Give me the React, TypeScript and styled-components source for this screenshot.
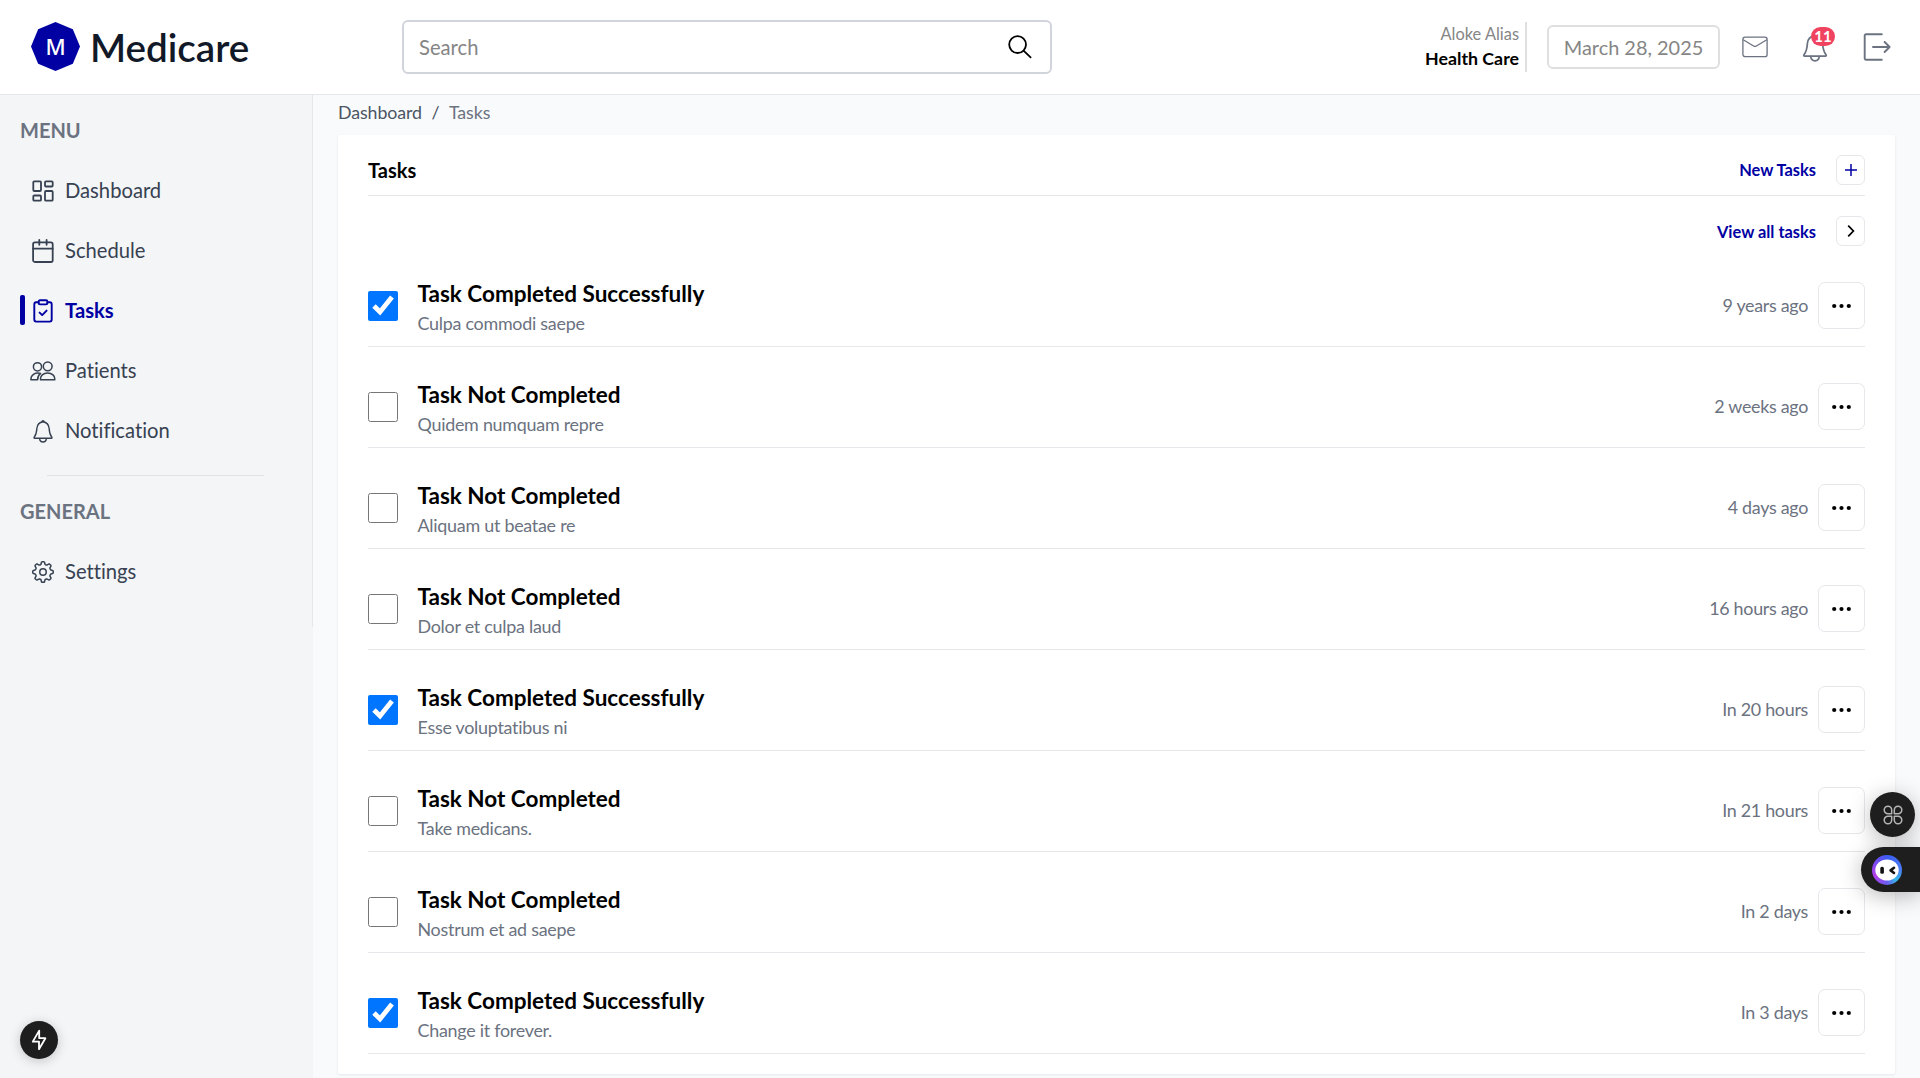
import React from "react";
import styled, { createGlobalStyle, css } from "styled-components";
import { GoGear } from "react-icons/go";

const navy = "#0000a3";
const line = "#e5e7eb";

const GlobalStyle = createGlobalStyle`
  * { box-sizing: border-box; }
  html, body { height: 100%; }
  body {
    margin: 0;
    overflow: hidden;
    background: #f9fafc;
    color: #000;
    font-family: Lato, "Open Sans", sans-serif;
    font-variant-ligatures: none;
  }
`;

const Page = styled.div`
  display: flex;
  flex-direction: column;
  height: 1078px;
  overflow: hidden;
`;

/* ---------- header ---------- */

const Header = styled.header`
  display: flex;
  align-items: center;
  flex: none;
  height: 95px;
  padding: 0 29px 1px 30px;
  background: #fff;
  border-bottom: 1px solid ${line};
`;

const Brand = styled.div`
  display: flex;
  align-items: center;
  gap: 11px;
  width: 372px;
  flex: none;
  padding-left: 1px;
`;

const BrandMark = styled.div`
  display: grid;
  place-items: center;
  width: 49px;
  height: 49px;
  clip-path: polygon(50% 0, 85.4% 14.6%, 100% 50%, 85.4% 85.4%, 50% 100%, 14.6% 85.4%, 0 50%, 14.6% 14.6%);
  background: ${navy};
  color: #fff;
  font: 500 22px/49px "Noto Sans", sans-serif;
`;

const BrandName = styled.span`
  font-size: 38.6px;
  font-weight: 600;
  line-height: 48px;
  padding-top: 1px;
  margin-left: -1px;
  color: #111827;
`;

const SearchBox = styled.label`
  display: flex;
  align-items: center;
  justify-content: space-between;
  width: 650px;
  height: 54px;
  flex: none;
  padding: 0 18px 0 15px;
  border: 2px solid #d1d5db;
  border-radius: 6px;
  background: #fff;
`;

const SearchInput = styled.input`
  flex: 1;
  border: 0;
  outline: 0;
  padding: 1px 0 0;
  background: transparent;
  font: 400 20.2px/26px Lato, sans-serif;
  &::placeholder { color: #858585; opacity: 1; }
`;

const HeaderRight = styled.div`
  display: flex;
  align-items: center;
  margin-left: auto;
`;

const User = styled.div`
  display: flex;
  flex-direction: column;
  justify-content: center;
  height: 50px;
  padding: 0 6px 2px 0;
  border-right: 2px solid #dedfe1;
  text-align: right;
`;

const UserName = styled.span`
  color: #858585;
  font-size: 16.4px;
  line-height: 24px;
`;

const UserRole = styled.span`
  font-size: 17.8px;
  font-weight: 700;
  line-height: 24px;
`;

const DateBox = styled.div`
  display: flex;
  align-items: center;
  justify-content: center;
  width: 173px;
  height: 44px;
  margin: 0 22px 0 20px;
  border: 2px solid #dfdfdf;
  border-radius: 6px;
  color: #858585;
  font-size: 19.9px;
`;

const HeaderIcons = styled.div`
  display: flex;
  align-items: center;
  gap: 32px;
  color: #6b7280;
  svg { display: block; }
`;

const BellWrap = styled.div`
  position: relative;
  margin-right: 1px;
`;

const Badge = styled.span`
  position: absolute;
  top: -5px;
  left: 11px;
  width: 24px;
  height: 19px;
  border-radius: 10px;
  background: #f0435f;
  color: #fff;
  text-align: center;
  font: 700 15px/18px Lato, sans-serif;
`;

/* ---------- body ---------- */

const Body = styled.div`
  display: flex;
  flex: 1;
  min-height: 0;
`;

const Sidebar = styled.aside`
  width: 313px;
  flex: none;
  background: #f3f5f7;
`;

const SidebarInner = styled.nav`
  display: flex;
  flex-direction: column;
  height: 532px;
  padding: 20px 0 0 20px;
  border-right: 1px solid ${line};
`;

const SectionTitle = styled.h2`
  margin: 0;
  height: 45px;
  padding-top: 1px;
  color: #6b7280;
  font-size: 20px;
  font-weight: 700;
  line-height: 28px;
`;

const NavItem = styled.a<{ $active?: boolean }>`
  display: flex;
  align-items: center;
  height: 60px;
  color: #374151;
  font-size: 20.2px;
  line-height: 30px;
  ${p => p.$active && css`color: ${navy}; font-weight: 700;`}
`;

const NavMarker = styled.span<{ $active?: boolean }>`
  width: 5px;
  height: 30px;
  border-radius: 2px;
  background: ${p => (p.$active ? navy : "transparent")};
`;

const NavIcon = styled.span`
  display: grid;
  place-items: center;
  width: 26px;
  height: 26px;
  margin: 1px 9.5px 0 4.5px;
  svg { display: block; }
`;

const NavLabel = styled.span``;

const NavDivider = styled.hr`
  width: 217px;
  height: 1px;
  margin: 15px 0 20px 27px;
  border: 0;
  background: #e1e3e6;
`;

const Main = styled.main`
  flex: 1;
  min-width: 0;
  padding: 0 25px;
`;

const Crumbs = styled.div`
  display: flex;
  align-items: center;
  gap: 9.5px;
  height: 40px;
  padding-bottom: 7px;
  color: #4b5563;
  font-size: 17.8px;
  letter-spacing: -0.08px;
  line-height: 24px;
`;

const CrumbCurrent = styled.span`
  color: #6b7280;
`;

const Card = styled.section`
  height: 939px;
  padding: 0 30px;
  border-radius: 2px;
  background: #fff;
  box-shadow: 0 1px 3px rgba(0, 0, 0, 0.08);
`;

const CardHeader = styled.div`
  display: flex;
  align-items: center;
  justify-content: space-between;
  height: 61px;
  padding-top: 9px;
  border-bottom: 1px solid ${line};
`;

const CardTitle = styled.h1`
  margin: 0;
  padding-top: 1px;
  font-size: 20px;
  font-weight: 700;
  line-height: 28px;
`;

const ViewAll = styled.div`
  display: flex;
  justify-content: flex-end;
  padding: 20px 0 0;
  height: 50px;
`;

const Action = styled.a`
  display: flex;
  align-items: center;
  gap: 20px;
  height: 30px;
  color: ${navy};
  font-size: 16.4px;
  font-weight: 700;
`;

const SquareButton = styled.button<{ $size: "small" | "large" }>`
  display: grid;
  place-items: center;
  width: ${p => (p.$size === "small" ? 29 : 47)}px;
  height: ${p => (p.$size === "small" ? 30 : 47)}px;
  padding: 0;
  border: 1px solid ${line};
  border-radius: ${p => (p.$size === "small" ? 6 : 7)}px;
  background: #fff;
  color: #000;
  svg { display: block; }
`;

const TaskRow = styled.div`
  display: flex;
  align-items: center;
  height: 101px;
  padding-top: 19px;
  border-bottom: 1px solid ${line};
`;

const Check = styled.input`
  width: 30px;
  height: 30px;
  margin: 0 19.5px 0 0;
  flex: none;
  accent-color: #0075ff;
`;

const TaskText = styled.div`
  flex: 1;
  padding-top: 6px;
`;

const TaskTitle = styled.div`
  font-size: 22.5px;
  font-weight: 700;
  line-height: 30px;
`;

const TaskNote = styled.div`
  height: 30px;
  color: #6b7280;
  font-size: 17.9px;
  letter-spacing: -0.26px;
  line-height: 28px;
`;

const TaskTime = styled.span`
  margin-right: 10px;
  padding-bottom: 2px;
  color: #6b7280;
  font-size: 17.9px;
  letter-spacing: -0.3px;
  line-height: 24px;
`;

/* ---------- floating widgets ---------- */

const Floating = styled.div`
  position: fixed;
  display: flex;
  align-items: center;
  background: #1e1e1f;
  box-shadow: 0 4px 22px rgba(0, 0, 0, 0.28);
`;

const AppsBubble = styled(Floating)`
  left: 1870px;
  top: 792px;
  width: 45px;
  height: 45px;
  justify-content: center;
  border-radius: 50%;
`;

const BotPill = styled(Floating)`
  right: 0;
  top: 847px;
  width: 59px;
  height: 45px;
  padding-left: 11px;
  border-radius: 23px 0 0 23px;
`;

const BoltBubble = styled(Floating)`
  left: 20px;
  top: 1021px;
  width: 38px;
  height: 38px;
  justify-content: center;
  border-radius: 50%;
  box-shadow: 0 2px 12px rgba(0, 0, 0, 0.2);
`;

const BotFace = styled.span`
  display: grid;
  place-items: center;
  width: 30px;
  height: 30px;
  border-radius: 50%;
  background: conic-gradient(#3b5bf0, #4a7df5 25%, #35b8e8 38%, #6a5cf0 50%, #b43fe8 68%, #8a45f2 80%, #3b5bf0);
`;

/* ---------- icons ---------- */

const DashboardIcon = () => (
  <svg width="22" height="22" viewBox="0 0 22 22" fill="none" stroke="currentColor" strokeWidth="1.8">
    <rect x="1.3" y="1.3" width="7.7" height="9.7" rx="1" />
    <rect x="13" y="1.3" width="7.7" height="5.2" rx="1" />
    <rect x="13" y="11" width="7.7" height="9.7" rx="1" />
    <rect x="1.3" y="15.5" width="7.7" height="5.2" rx="1" />
  </svg>
);

const CalendarIcon = () => (
  <svg width="22" height="24" viewBox="0 0 22 24" fill="none" stroke="currentColor" strokeWidth="1.8" strokeLinecap="round">
    <rect x="1.1" y="3.4" width="19.6" height="19.6" rx="1.8" />
    <path d="M1.1 9.6H20.7M7.3 1V5.8M14.6 1V5.8" />
  </svg>
);

const ClipboardIcon = () => (
  <svg width="22" height="24" viewBox="0 0 22 24" fill="none" stroke="currentColor" strokeWidth="1.9" strokeLinecap="round" strokeLinejoin="round">
    <path d="M6.6 3.3H4.2A2 2 0 0 0 2.3 5.3V20.6A2 2 0 0 0 4.2 22.6H17.8A2 2 0 0 0 19.7 20.6V5.3A2 2 0 0 0 17.8 3.3H15.4" />
    <rect x="6.6" y="1.2" width="8.8" height="4.2" rx="1.4" />
    <path d="M7.6 13.6L10.2 16.1L14.6 11.6" />
  </svg>
);

const PeopleIcon = () => (
  <svg width="26" height="20" viewBox="0 0 26 20" fill="none" stroke="currentColor" strokeWidth="1.5" strokeLinejoin="round">
    <circle cx="7.5" cy="5.8" r="4.1" />
    <circle cx="17.7" cy="5.3" r="4.4" />
    <path d="M10.6 18.8H24.7C25.4 14.8 21.8 12 17.6 12C13.4 12 9.9 14.8 10.6 18.8Z" />
    <path d="M10.6 12.4C5.4 11.2 0.9 13.6 0.9 18.8H7.6C7.6 16 8.6 13.8 10.6 12.4Z" />
  </svg>
);

const BellIcon = ({ size = 24, stroke = 1.4 }: { size?: number; stroke?: number }) => (
  <svg width={size} height={size} viewBox="0 0 24 24" fill="none" stroke="currentColor" strokeWidth={stroke} strokeLinejoin="round" strokeLinecap="round">
    <path d="M12 2.7C8.6 3.3 6.2 5.8 5.9 9.2C5.7 13 5.2 15.6 3.2 18.2C2.8 18.8 3 19.3 3.7 19.3H20.3C21 19.3 21.2 18.8 20.8 18.2C18.8 15.6 18.3 13 18.1 9.2C17.8 5.8 15.4 3.3 12 2.7Z" />
    <path d="M11 2.5Q12 1 13 2.5" />
    <path d="M8.6 19.6C8.8 21.7 10.1 23 12 23C13.9 23 15.2 21.7 15.4 19.6" />
  </svg>
);

const MailIcon = () => (
  <svg width="26" height="22" viewBox="0 0 26 22" fill="none" stroke="currentColor" strokeWidth="1.3" strokeLinejoin="round">
    <rect x="0.9" y="1.2" width="24.2" height="19.4" rx="2.2" />
    <path d="M1.2 3.8L12 10.2Q13 10.7 14 10.2L24.8 3.8" />
  </svg>
);

const ExitIcon = () => (
  <svg width="28" height="28" viewBox="0 0 28 28" fill="none" stroke="currentColor" strokeWidth="1.9" strokeLinecap="round" strokeLinejoin="round">
    <path d="M18.8 1.2H3A1.3 1.3 0 0 0 1.7 2.5V25.5A1.3 1.3 0 0 0 3 26.8H18.8" />
    <path d="M10 14H26.6M21.6 9L26.6 14L21.6 19" />
  </svg>
);

const SearchIcon = () => (
  <svg width="24" height="24" viewBox="0 0 24 24" fill="none" stroke="#000" strokeWidth="1.8" strokeLinecap="round">
    <circle cx="9.6" cy="9.6" r="8.4" />
    <path d="M15.8 15.8L22.6 22.4" />
  </svg>
);

const PlusIcon = () => (
  <svg width="14" height="14" viewBox="0 0 14 14" stroke={navy} strokeWidth="1.5">
    <path d="M7 1V13M1 7H13" />
  </svg>
);

const ChevronIcon = () => (
  <svg width="14" height="14" viewBox="0 0 14 14" fill="none" stroke="#000" strokeWidth="1.7">
    <path d="M4.2 1.6L9.4 7L4.2 12.4" />
  </svg>
);

const DotsIcon = () => (
  <svg width="21" height="6" viewBox="0 0 21 6" fill="#000">
    <circle cx="3.2" cy="3" r="2.1" />
    <circle cx="10.5" cy="3" r="2.1" />
    <circle cx="17.8" cy="3" r="2.1" />
  </svg>
);

const PetalsIcon = () => (
  <svg width="20" height="20" viewBox="0 0 20 20" fill="none" stroke="#b4b4b4" strokeWidth="1.5" strokeLinejoin="round">
    <path d="M8.7 8.7H5A3.75 3.75 0 1 1 8.7 5Z" />
    <path d="M11.3 8.7V5A3.75 3.75 0 1 1 15 8.7Z" />
    <path d="M8.7 11.3V15A3.75 3.75 0 1 1 5 11.3Z" />
    <path d="M11.3 11.3H15A3.75 3.75 0 1 1 11.3 15Z" />
  </svg>
);

const BotEyes = () => (
  <svg width="24" height="22" viewBox="0 0 24 22">
    <ellipse cx="12" cy="11" rx="11.7" ry="10.6" fill="#fff" />
    <rect x="5.3" y="7.8" width="3.6" height="7" rx="1.6" fill="#111" />
    <path d="M19 8.8L15.6 11.4L19 14" fill="none" stroke="#111" strokeWidth="2.6" strokeLinecap="round" strokeLinejoin="round" />
  </svg>
);

const BoltIcon = () => (
  <svg width="18" height="22" viewBox="0 0 18 22" fill="none" stroke="#fff" strokeWidth="1.8" strokeLinejoin="round">
    <path d="M9.2 1.6L2.8 12.6H9V20.2L15.4 9.2H9.2Z" />
  </svg>
);

/* ---------- data ---------- */

const menu = [
  { label: "Dashboard", icon: <DashboardIcon /> },
  { label: "Schedule", icon: <CalendarIcon /> },
  { label: "Tasks", icon: <ClipboardIcon />, active: true },
  { label: "Patients", icon: <PeopleIcon /> },
  { label: "Notification", icon: <BellIcon /> },
];

const general = [{ label: "Settings", icon: <GoGear size={24} /> }];

const tasks = [
  { done: true, note: "Culpa commodi saepe", time: "9 years ago" },
  { done: false, note: "Quidem numquam repre", time: "2 weeks ago" },
  { done: false, note: "Aliquam ut beatae re", time: "4 days ago" },
  { done: false, note: "Dolor et culpa laud", time: "16 hours ago" },
  { done: true, note: "Esse voluptatibus ni", time: "In 20 hours" },
  { done: false, note: "Take medicans.", time: "In 21 hours" },
  { done: false, note: "Nostrum et ad saepe", time: "In 2 days" },
  { done: true, note: "Change it forever.", time: "In 3 days" },
];

type Item = { label: string; icon: React.ReactNode; active?: boolean };

const NavList = ({ items }: { items: Item[] }) => (
  <>
    {items.map(({ label, icon, active }) => (
      <NavItem key={label} $active={active}>
        <NavMarker $active={active} />
        <NavIcon>{icon}</NavIcon>
        <NavLabel>{label}</NavLabel>
      </NavItem>
    ))}
  </>
);

export default function App() {
  return (
    <Page>
      <GlobalStyle />
      <Header>
        <Brand>
          <BrandMark>M</BrandMark>
          <BrandName>Medicare</BrandName>
        </Brand>
        <SearchBox>
          <SearchInput placeholder="Search" />
          <SearchIcon />
        </SearchBox>
        <HeaderRight>
          <User>
            <UserName>Aloke Alias</UserName>
            <UserRole>Health Care</UserRole>
          </User>
          <DateBox>March 28, 2025</DateBox>
          <HeaderIcons>
            <MailIcon />
            <BellWrap>
              <BellIcon size={30} stroke={1.4} />
              <Badge>11</Badge>
            </BellWrap>
            <ExitIcon />
          </HeaderIcons>
        </HeaderRight>
      </Header>
      <Body>
        <Sidebar>
          <SidebarInner>
            <SectionTitle>MENU</SectionTitle>
            <NavList items={menu} />
            <NavDivider />
            <SectionTitle>GENERAL</SectionTitle>
            <NavList items={general} />
          </SidebarInner>
        </Sidebar>
        <Main>
          <Crumbs>
            <span>Dashboard</span>
            <span>/</span>
            <CrumbCurrent>Tasks</CrumbCurrent>
          </Crumbs>
          <Card>
            <CardHeader>
              <CardTitle>Tasks</CardTitle>
              <Action>
                New Tasks
                <SquareButton $size="small"><PlusIcon /></SquareButton>
              </Action>
            </CardHeader>
            <ViewAll>
              <Action>
                View all tasks
                <SquareButton $size="small"><ChevronIcon /></SquareButton>
              </Action>
            </ViewAll>
            {tasks.map(t => (
              <TaskRow key={t.note}>
                <Check type="checkbox" defaultChecked={t.done} />
                <TaskText>
                  <TaskTitle>{t.done ? "Task Completed Successfully" : "Task Not Completed"}</TaskTitle>
                  <TaskNote>{t.note}</TaskNote>
                </TaskText>
                <TaskTime>{t.time}</TaskTime>
                <SquareButton $size="large"><DotsIcon /></SquareButton>
              </TaskRow>
            ))}
          </Card>
        </Main>
      </Body>
      <AppsBubble><PetalsIcon /></AppsBubble>
      <BotPill><BotFace><BotEyes /></BotFace></BotPill>
      <BoltBubble><BoltIcon /></BoltBubble>
    </Page>
  );
}
